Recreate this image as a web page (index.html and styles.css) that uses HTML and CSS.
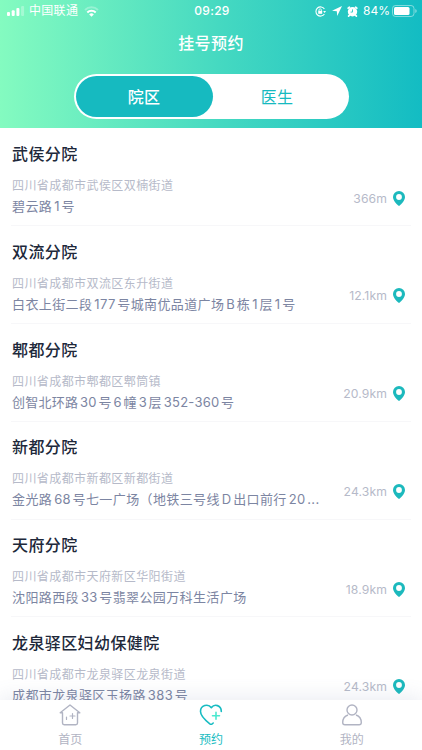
FILE: index.html
```html
<!DOCTYPE html>
<html lang="zh-CN">
<head>
<meta charset="utf-8">
<meta name="viewport" content="width=device-width, initial-scale=1">
<title>挂号预约</title>
<link rel="stylesheet" href="styles.css">
</head>
<body>
<div class="app">
  <header class="header">
    <div class="status">
      <div class="status-left">
        <svg class="signal" width="18" height="10" viewBox="0 0 18 10" fill="#fff"><rect x="0" y="6" width="3" height="4" rx="1"/><rect x="4.7" y="4.2" width="3" height="5.8" rx="1"/><rect x="9.4" y="2" width="3" height="8" rx="1"/><rect x="14.1" y="0" width="3" height="10" rx="1" opacity=".3"/></svg>
        <span class="carrier">中国联通</span>
        <svg class="wifi" width="15" height="11" viewBox="0 0 15 11" fill="none" stroke="#fff" stroke-width="2"><path d="M1 4a9.2 9.2 0 0 1 13 0" opacity=".3"/><path d="M3.3 6.5a6 6 0 0 1 8.4 0"/><path d="M5.2 8.4a3.3 3.3 0 0 1 4.6 0L7.5 10.8z" fill="#fff" stroke="none"/></svg>
      </div>
      <span class="clock">09:29</span>
      <div class="status-right">
        <svg width="11" height="11" viewBox="0 0 11 11" fill="none" stroke="#fff"><path d="M9.400 3A4.600 4.600 0 1 0 9.400 8" stroke-width="1.100"/><path d="M8.200 5h2.800L9.600 7z" fill="#fff" stroke="none"/><rect x="3.2" y="4.800" width="4" height="3" fill="#fff" stroke="none"/><path d="M4 5V4a1.2 1.2 0 0 1 2.400 0v1" stroke-width=".8"/></svg>
        <svg width="10" height="10" viewBox="0 0 10 10" fill="#fff"><path d="M10 0 0 4.8l4.8.4L5.2 10z"/></svg>
        <svg width="11" height="11" viewBox="0 0 11 11"><circle cx="5.5" cy="5.8" r="4.7" fill="#fff"/><path d="M1.200 2.200 2.400 1.200M9.800 2.200 8.600 1.200M2.4 9.2l-.8.9M8.6 9.2l.8.9" stroke="#fff" stroke-width="1.7" stroke-linecap="round"/><path d="M5.5 3.4v2.7H3.6" fill="none" stroke="#2dcac5" stroke-width=".9"/></svg>
        <span class="percent">84%</span>
        <svg class="battery" width="25" height="12" viewBox="0 0 25 12"><rect x=".5" y=".5" width="21.5" height="11" rx="3" fill="none" stroke="#fff" opacity=".45"/><rect x="2" y="2" width="15.5" height="8" rx="1.5" fill="#fff"/><path d="M23.3 4v4q1.4-.6 1.4-2t-1.4-2" fill="#fff" opacity=".5"/></svg>
      </div>
    </div>
    <h1 class="title">挂号预约</h1>
    <div class="tabs"><button class="tab tab-on">院区</button><button class="tab">医生</button></div>
  </header>

  <main class="list">
    <section class="row"><div class="info"><h2>武侯分院</h2><p class="area">四川省成都市武侯区双楠街道</p><p class="street">碧云路<i>1</i>号</p></div><div class="dist">366m<svg class="pin" viewBox="0 0 12 15"><path fill-rule="evenodd" d="M6 0a6 6 0 0 0-6 6c0 3.6 3.4 6.8 5.2 8.4q.8.7 1.6 0C8.600 12.800 12 9.600 12 6a6 6 0 0 0-6-6m0 3.100a2.900 2.900 0 1 1 0 5.800 2.900 2.900 0 0 1 0-5.800"/></svg></div></section>
    <section class="row"><div class="info"><h2>双流分院</h2><p class="area">四川省成都市双流区东升街道</p><p class="street">白衣上街二段<i>177</i>号城南优品道广场<i>B</i>栋<i>1</i>层<i>1</i>号</p></div><div class="dist">12.1km<svg class="pin" viewBox="0 0 12 15"><path fill-rule="evenodd" d="M6 0a6 6 0 0 0-6 6c0 3.6 3.4 6.8 5.2 8.4q.8.7 1.6 0C8.600 12.800 12 9.600 12 6a6 6 0 0 0-6-6m0 3.100a2.900 2.900 0 1 1 0 5.800 2.900 2.900 0 0 1 0-5.800"/></svg></div></section>
    <section class="row"><div class="info"><h2>郫都分院</h2><p class="area">四川省成都市郫都区郫筒镇</p><p class="street range">创智北环路<i>30</i>号<i>6</i>幢<i>3</i>层<i>352-360</i>号</p></div><div class="dist">20.9km<svg class="pin" viewBox="0 0 12 15"><path fill-rule="evenodd" d="M6 0a6 6 0 0 0-6 6c0 3.6 3.4 6.8 5.2 8.4q.8.7 1.6 0C8.600 12.800 12 9.600 12 6a6 6 0 0 0-6-6m0 3.100a2.900 2.900 0 1 1 0 5.800 2.900 2.900 0 0 1 0-5.800"/></svg></div></section>
    <section class="row"><div class="info"><h2>新都分院</h2><p class="area">四川省成都市新都区新都街道</p><p class="street">金光路<i>68</i>号七一广场（地铁三号线<i>D</i>出口前行<i>20</i>...</p></div><div class="dist">24.3km<svg class="pin" viewBox="0 0 12 15"><path fill-rule="evenodd" d="M6 0a6 6 0 0 0-6 6c0 3.6 3.4 6.8 5.2 8.4q.8.7 1.6 0C8.600 12.800 12 9.600 12 6a6 6 0 0 0-6-6m0 3.100a2.900 2.900 0 1 1 0 5.800 2.900 2.900 0 0 1 0-5.800"/></svg></div></section>
    <section class="row"><div class="info"><h2>天府分院</h2><p class="area">四川省成都市天府新区华阳街道</p><p class="street">沈阳路西段<i>33</i>号翡翠公园万科生活广场</p></div><div class="dist">18.9km<svg class="pin" viewBox="0 0 12 15"><path fill-rule="evenodd" d="M6 0a6 6 0 0 0-6 6c0 3.6 3.4 6.8 5.2 8.4q.8.7 1.6 0C8.600 12.800 12 9.600 12 6a6 6 0 0 0-6-6m0 3.100a2.900 2.900 0 1 1 0 5.800 2.900 2.900 0 0 1 0-5.800"/></svg></div></section>
    <section class="row"><div class="info"><h2>龙泉驿区妇幼保健院</h2><p class="area">四川省成都市龙泉驿区龙泉街道</p><p class="street">成都市龙泉驿区玉扬路<i>383</i>号</p></div><div class="dist">24.3km<svg class="pin" viewBox="0 0 12 15"><path fill-rule="evenodd" d="M6 0a6 6 0 0 0-6 6c0 3.6 3.4 6.8 5.2 8.4q.8.7 1.6 0C8.600 12.800 12 9.600 12 6a6 6 0 0 0-6-6m0 3.100a2.900 2.900 0 1 1 0 5.800 2.900 2.900 0 0 1 0-5.800"/></svg></div></section>
  </main>

  <nav class="nav">
    <a class="nav-item"><svg width="24" height="22" viewBox="0 0 24 22" fill="none" stroke="currentColor" stroke-width="1.4" stroke-linejoin="round" stroke-linecap="round"><path d="M4.500 8.700H2.200L12 1l9.800 7.700h-2.300V19q0 1.700-1.700 1.700H6.200Q4.500 20.700 4.500 19z"/><path d="M14.500 9.500v5M12 12h5M8.500 13v2.500" stroke-width="1.200"/></svg><span>首页</span></a>
    <a class="nav-item nav-on"><svg width="24" height="22" viewBox="0 0 24 22" fill="none" stroke="currentColor" stroke-width="1.600" stroke-linecap="round" stroke-linejoin="round"><path d="M22.300 7.500C22.300 1.200 15.500-.6 12.300 3.700 9.200-.8 1.500 1.200 1.500 7.500c0 4.800 5.500 9.300 9.300 12.300q1.200.9 2.400 0l1-.8"/><path d="M17 8.300v7M13.500 11.800h7" stroke="#4be8cf"/></svg><span>预约</span></a>
    <a class="nav-item"><svg width="24" height="22" viewBox="0 0 24 22" fill="none" stroke="currentColor" stroke-width="1.400"><circle cx="12" cy="6" r="5"/><path d="M8 11C4.800 12.200 2.700 15.200 2.700 18.500q0 2.200 2.200 2.200h14.200q2.200 0 2.200-2.200c0-3.300-2.100-6.300-5.300-7.500"/></svg><span>我的</span></a>
  </nav>
</div>
</body>
</html>
```
FILE: styles.css
```css
* { box-sizing: border-box; }
body, h1, h2, p { margin: 0; }
body { font-family: Inter, "Noto Sans CJK SC", sans-serif; background: #fff; }
.app { width: 422px; height: 750px; display: flex; flex-direction: column; overflow: hidden; }
.header { height: 128px; flex: none; color: #fff; background: linear-gradient(90deg, #84fbc0 0%, #45d9c1 52%, #13bcc3 100%); }
.status { height: 22px; padding: 0 5px 0 7px; display: grid; grid-template-columns: 1fr auto 1fr; align-items: center; font-size: 12px; line-height: 22px; }
.status-left, .status-right { display: flex; align-items: center; }
.signal { margin-right: 4px; }
.carrier { letter-spacing: .3px; }
.wifi { margin-left: 6px; }
.clock { font-weight: 500; letter-spacing: .3px; }
.status-right { justify-content: flex-end; gap: 5px; }
.status-right svg:first-child { margin-right: 1px; }
.percent { letter-spacing: 0; margin-right: -3px; }
.title { height: 42px; text-align: center; font-size: 16px; font-weight: 500; line-height: 42px; letter-spacing: .4px; }
.tabs { width: 275px; height: 45px; margin: 10px auto 0 74px; padding: 2px; border-radius: 23px; background: #fff; display: flex; }
.tab { flex: 1; padding: 0 6px 0 0; border: 0; border-radius: 21px; background: transparent; color: #16bac0; font: 400 16px/42px Inter, "Noto Sans CJK SC", sans-serif; letter-spacing: .3px; }
.tab-on { flex: 0 0 137px; padding-right: 1px; background: #16bac0; color: #fff; font-weight: 500; }
.list { flex: 1; min-height: 0; overflow: hidden; padding: .6px 11px 0; }
.row { height: 97.75px; padding: 13.6px 6px 0 1px; border-bottom: 1px solid #f7f7f9; display: flex; justify-content: space-between; }
.info { white-space: nowrap; }
h2 { font-size: 16px; line-height: 24px; font-weight: 500; letter-spacing: .4px; color: #20283a; }
.area { margin-top: 10px; font-size: 12px; line-height: 20px; letter-spacing: .42px; color: #b6bac9; }
.street { font-size: 13px; line-height: 20px; letter-spacing: .38px; color: #7c85a2; }
.street i { font-style: normal; margin: 0 1.6px 0 2px; }
.range { letter-spacing: .22px; }
.dist { height: 20px; margin-top: 46px; display: flex; align-items: center; gap: 6px; color: #b6bac9; font-size: 12.2px; letter-spacing: .1px; }
.pin { width: 12px; height: 15px; fill: #1cb9bd; }
.nav { height: 50px; flex: none; position: relative; display: grid; grid-template-columns: repeat(3, 1fr); background: #fff; box-shadow: 0 -3px 20px rgba(105, 120, 165, .14); }
.nav-item { display: flex; flex-direction: column; align-items: center; padding-top: 4px; color: #b1b4c3; font-size: 12px; line-height: 22px; }
.nav-item span { margin-top: 3px; }
.nav-on { color: #18bcc2; }
```
